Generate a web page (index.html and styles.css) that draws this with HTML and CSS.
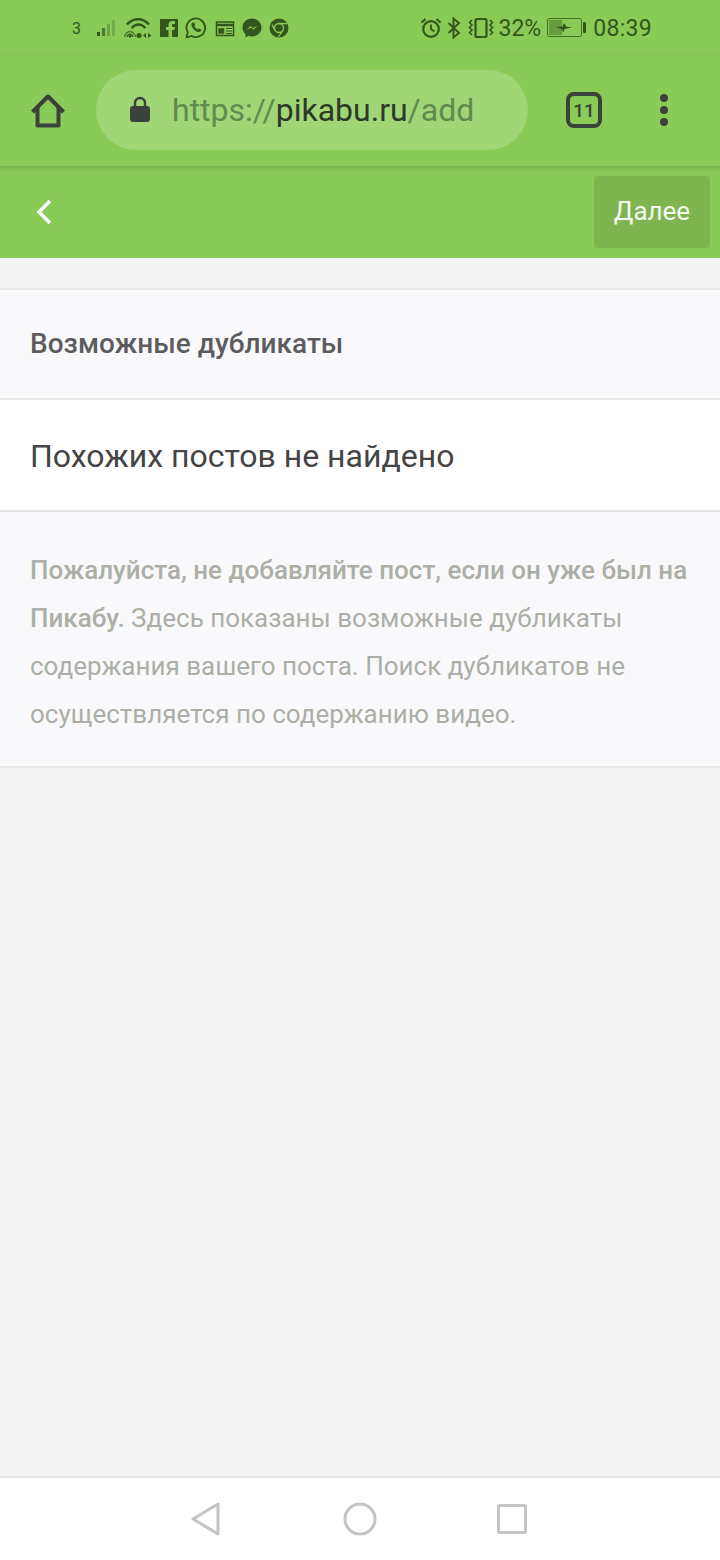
FILE: index.html
```html
<!DOCTYPE html>
<html lang="ru">
<head>
<meta charset="utf-8">
<title>Пикабу</title>
<link rel="stylesheet" href="styles.css">
</head>
<body>
<div class="app">
  <div class="status">
    <div class="status-left">
      <span class="sim">3</span>
      <svg class="ic-signal" width="22" height="20" viewBox="0 0 22 20"><rect x="0" y="14" width="3" height="4" fill="#33561c"/><rect x="5" y="10" width="3" height="8" fill="#33561c" opacity=".7"/><rect x="10" y="6" width="3" height="12" fill="#33561c" opacity=".35"/><rect x="15" y="2" width="3" height="16" fill="#33561c" opacity=".25"/></svg>
      <svg class="ic-wifi" width="28" height="22" viewBox="0 0 28 22" fill="none" stroke="#33561c"><path d="M3 7.500C9 .5 19 .5 25 7.500" stroke-width="2.400"/><path d="M7.500 11C12 6.500 17 6.500 21.500 11" stroke-width="2.400"/><path d="M.7 20c0-7 10.600-7 10.600 0M3 20c0-4 6-4 6 0" stroke-width="1.100"/><circle cx="6" cy="19" r="1.200" fill="#33561c"/><circle cx="15" cy="18.500" r="2.500" fill="#33561c" stroke="none"/><path d="M19 18.500l3-2.500v5zM24 16l3.500 2.500L24 21z" fill="#33561c" stroke="none"/></svg>
      <svg width="18" height="18" viewBox="0 0 18 18"><path fill="#33561c" d="M1 0h16a1 1 0 0 1 1 1v16a1 1 0 0 1-1 1h-5v-7h2.500l.4-3H12V6.500c0-1 .4-1.500 1.500-1.500H15V2.300C14 2.100 13.200 2 12.300 2 10 2 8.500 3.500 8.500 6v2H6v3h2.500v7H1a1 1 0 0 1-1-1V1a1 1 0 0 1 1-1z"/></svg>
      <svg class="ic-wa" width="22" height="22" viewBox="0 0 22 22" fill="none"><path d="M1.500 20.500l1.300-5A9.300 9.300 0 1 1 6.500 19z" stroke="#33561c" stroke-width="1.800" stroke-linejoin="round"/><path fill="#33561c" d="M7.500 5.500c-1.500 1-1.500 3 0 5.200 1.600 2.400 4 4.200 6 4.300 1.500 0 2.700-1 2.700-2.300l-2.500-1.400-1 1.100c-1.400-.5-2.700-1.800-3.400-3.300l1-1-1.200-2.600z"/></svg>
      <svg width="20" height="18" viewBox="0 0 20 18" fill="none" stroke="#33561c" stroke-width="1.500"><path d="M1.500 3h17v13.500h-17z"/><path d="M1 6h18" stroke-width="2.500"/><path d="M4 10h4.500v4H4z" fill="#33561c"/><path d="M11 9.500h6M11 12h6M11 14.500h6" stroke-width="1.200"/></svg>
      <svg width="20" height="20" viewBox="0 0 20 20"><path fill="#33561c" d="M10 .5C4.500.5.500 4.400.500 9.600c0 2.800 1.100 5.100 3 6.700v3.200l3-1.700c1.100.4 2.300.6 3.500.6 5.500 0 9.500-3.900 9.500-8.800S15.500.5 10 .5z"/><path d="M4.500 12l4-4 2.500 2.200L15.500 7.500l-4 4.300-2.500-2.200z" fill="#8aca57"/></svg>
      <svg width="20" height="20" viewBox="0 0 20 20"><circle cx="10" cy="10" r="9.500" fill="#33561c"/><circle cx="10" cy="10" r="4.500" fill="none" stroke="#8aca57" stroke-width="1.300"/><path d="M10 5.500h8M6 12.500L3 6.500M14 12l-4.500 7" stroke="#8aca57" stroke-width="1.300"/></svg>
    </div>
    <div class="status-right">
      <svg width="22" height="22" viewBox="0 0 22 22" fill="none" stroke="#33561c" stroke-width="2.200"><circle cx="11" cy="12" r="7.800"/><path d="M11 7.500V12l3.500 2.500" stroke-width="1.800"/><path d="M1.500 5.500L5.500 2M20.500 5.500L16.500 2"/></svg>
      <svg class="ic-bt" width="14" height="22" viewBox="0 0 14 22" fill="none" stroke="#33561c" stroke-width="1.900"><path d="M1.500 6l10.500 10-5.500 4.500V1.500L12 6 1.500 16"/></svg>
      <svg class="ic-vib" width="26" height="22" viewBox="0 0 26 22" fill="none" stroke="#33561c"><rect x="7.500" y="2" width="11" height="18" rx="1.500" stroke-width="2.200"/><path d="M4 3L1.500 5.500 4 8 1.500 10.500 4 13 1.500 15.500 4 18M22 3l2.500 2.500L22 8l2.500 2.500L22 13l2.500 2.500L22 18" stroke-width="1.600"/></svg>
      <span class="pct">32%</span>
      <svg class="ic-batt" width="39" height="20" viewBox="0 0 39 20"><rect x=".5" y=".500" width="34" height="18" rx="2" fill="none" stroke="#33561c" stroke-width="1" opacity=".8"/><rect x="2" y="2" width="13" height="15" fill="#33561c" opacity=".4"/><path d="M9 9l6.500-.5L17 5l2.500 3.700 5.500.8-7.500 1.500-1 3.500-2-3.500z" fill="#33561c"/><rect x="36" y="4" width="3" height="11" rx="1" fill="#33561c"/></svg>
      <span class="clock">08:39</span>
    </div>
  </div>

  <div class="browser">
    <svg class="ic-home" width="38" height="38" viewBox="0 0 38 38" fill="none" stroke="#3a423c" stroke-width="4" stroke-linejoin="round"><path d="M3.500 20L19 4.500 34.500 20M8.500 16v17.500h21V16"/></svg>
    <div class="url">
      <svg class="ic-lock" width="20" height="26" viewBox="0 0 20 26"><path d="M5 11V7a5 5 0 0 1 10 0v4" fill="none" stroke="#3a423c" stroke-width="2.400"/><rect y="10" width="20" height="16" rx="3" fill="#3a423c"/></svg>
      <span class="url-text"><span class="dim">https://</span><span class="host">pikabu.ru</span><span class="dim">/add</span></span>
    </div>
    <div class="tabs">11</div>
    <div class="menu"><i></i><i></i><i></i></div>
  </div>

  <div class="topbar">
    <svg class="ic-back" width="16" height="26" viewBox="0 0 16 26" fill="none" stroke="#fff" stroke-width="3.400"><path d="M14 2L3 13l11 11"/></svg>
    <button class="next">Далее</button>
  </div>

  <main class="content">
    <div class="title-row">Возможные дубликаты</div>
    <div class="empty-row">Похожих постов не найдено</div>
    <div class="note"><b>Пожалуйста, не добавляйте пост, если он уже был на Пикабу.</b> Здесь показаны возможные дубликаты содержания вашего поста. Поиск дубликатов не осуществляется по содержанию видео.</div>
  </main>

  <nav class="navbar">
    <svg class="nav-back" width="32" height="36" viewBox="0 0 32 36" fill="none" stroke="#c4c4c4" stroke-width="3" stroke-linejoin="round"><path d="M28 3v30L3 18z"/></svg>
    <svg class="nav-home" width="34" height="34" viewBox="0 0 34 34" fill="none" stroke="#c4c4c4" stroke-width="3"><circle cx="17" cy="17" r="15"/></svg>
    <svg width="30" height="30" viewBox="0 0 30 30" fill="none" stroke="#c4c4c4" stroke-width="3" stroke-linejoin="round"><rect x="1.500" y="1.500" width="27" height="27" rx="1"/></svg>
  </nav>
</div>
</body>
</html>
```
FILE: styles.css
```css
* { box-sizing: border-box; }
html, body { margin: 0; padding: 0; }
body { font-family: Roboto, "Liberation Sans", sans-serif; background: #f3f3f3; }
.app { width: 720px; height: 1560px; display: flex; flex-direction: column; overflow: hidden; }

.status { height: 56px; background: #8aca57; display: flex; justify-content: space-between; align-items: center; padding: 0 68px 0 72px; color: #33561c; flex: none; }
.status-left, .status-right { display: flex; align-items: center; }
.status-left { gap: 7px; }
.sim { font-size: 16px; width: 18px; }
.ic-signal { margin-right: -2px; }
.ic-wifi { margin-right: 1px; }
.ic-wa { margin-right: 1px; }
.ic-bt { margin-left: 5px; }
.ic-vib { margin-left: 7px; }
.pct { font-size: 23px; margin-left: 5px; }
.ic-batt { margin-left: 6px; }
.clock { font-size: 23px; margin-left: 7px; letter-spacing: .3px; }

.browser { height: 110px; background: #8aca57; display: flex; align-items: center; padding: 0 0 0 29px; position: relative; box-shadow: 0 2px 4px rgba(0,0,0,.14); z-index: 1; flex: none; }
.ic-home { flex: none; margin-right: 29px; }
.url { width: 432px; height: 80px; border-radius: 40px; background: #a1d677; display: flex; align-items: center; padding-left: 34px; margin-top: -2px; flex: none; }
.ic-lock { margin-right: 22px; margin-top: -2px; }
.url-text { font-size: 32px; white-space: nowrap; color: #2f3d2a; }
.dim { color: #608a4c; }
.host { color: #2c3a28; }
.tabs { width: 36px; height: 36px; margin-left: 38px; margin-top: -2px; border: 4px solid #3a423c; border-radius: 8px; font-size: 19px; font-weight: 500; color: #3a423c; display: flex; align-items: center; justify-content: center; flex: none; }
.menu { margin-left: 58px; margin-top: -2px; display: flex; flex-direction: column; gap: 4px; flex: none; }
.menu i { display: block; width: 8px; height: 8px; border-radius: 50%; background: #3a423c; }

.topbar { height: 92px; background: #8aca57; display: flex; align-items: center; justify-content: space-between; padding: 0 10px 0 36px; flex: none; }
.next { width: 116px; height: 72px; border: 0; border-radius: 4px; background: #7fb551; color: #f5faf0; font: 400 26px Roboto, sans-serif; padding: 0 0 2px; }

.content { flex: 1; padding-top: 30px; }
.title-row { height: 112px; background: #f9f9fb; border-top: 2px solid #e6e6e6; border-bottom: 2px solid #e6e6e6; padding: 0 0 2px 30px; display: flex; align-items: center; font-size: 28px; font-weight: 500; color: #5c5c5e; }
.empty-row { height: 112px; background: #fff; border-bottom: 2px solid #e6e6e6; padding: 2px 0 0 30px; display: flex; align-items: center; font-size: 32px; color: #444; }
.note { background: #f9f9fb; border-bottom: 2px solid #e6e6e6; padding: 34px 20px 28px 30px; font-size: 26px; line-height: 48px; color: #abafa6; }
.note b { font-weight: 500; }

.navbar { height: 84px; background: #fff; border-top: 2px solid #e2e2e2; display: flex; align-items: center; padding-left: 190px; flex: none; }
.nav-back { margin-right: 121px; }
.nav-home { margin-right: 120px; }
```
